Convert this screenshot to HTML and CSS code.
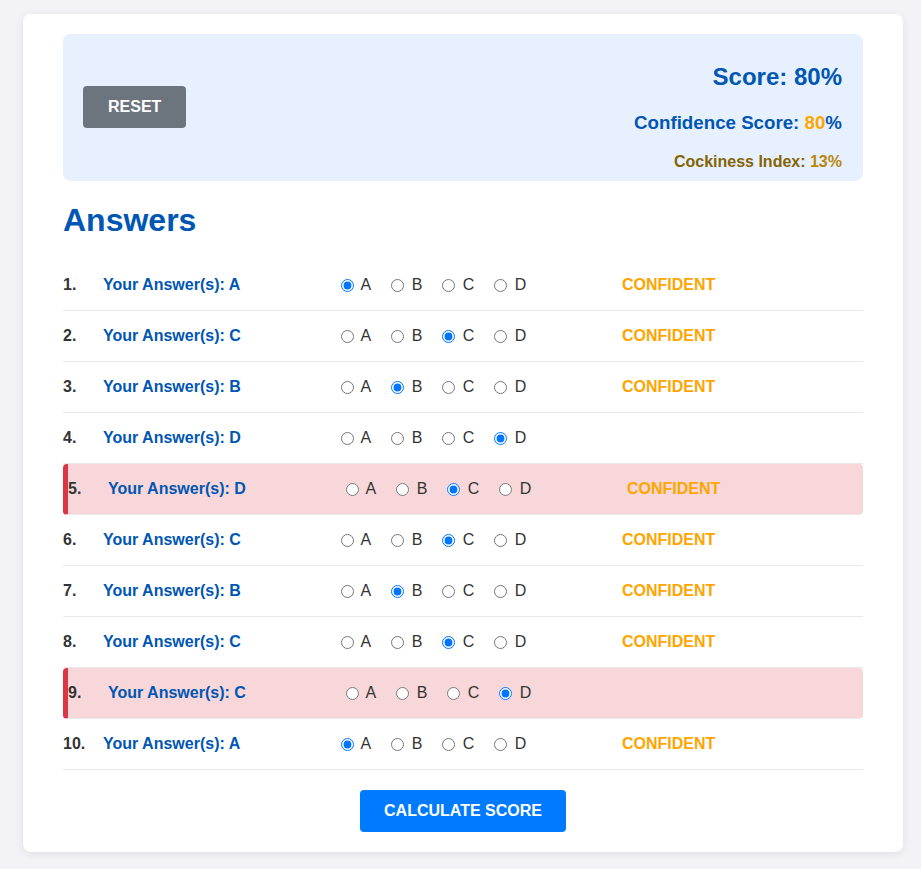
FILE: index.html
```html
<!DOCTYPE html>
<html lang="en">
<head>
<meta charset="utf-8">
<title>Answers</title>
<link rel="stylesheet" href="styles.css">
</head>
<body>
<div class="container">
  <div class="summary">
    <button class="btn btn-reset">RESET</button>
    <div class="scores">
      <h2 class="score">Score: 80%</h2>
      <h3 class="confidence">Confidence Score: <span class="orange">80</span>%</h3>
      <h4 class="cockiness">Cockiness Index: <span class="gold">13%</span></h4>
    </div>
  </div>

  <h1 class="title">Answers</h1>

  <div class="rows">
    <div class="row"><span class="num">1.</span><span class="ans">Your Answer(s): A</span>
      <span class="opts"><label><input type="radio" name="q1" checked> A</label><label><input type="radio" name="q1"> B</label><label><input type="radio" name="q1"> C</label><label><input type="radio" name="q1"> D</label></span>
      <span class="conf">CONFIDENT</span></div>
    <div class="row"><span class="num">2.</span><span class="ans">Your Answer(s): C</span>
      <span class="opts"><label><input type="radio" name="q2"> A</label><label><input type="radio" name="q2"> B</label><label><input type="radio" name="q2" checked> C</label><label><input type="radio" name="q2"> D</label></span>
      <span class="conf">CONFIDENT</span></div>
    <div class="row"><span class="num">3.</span><span class="ans">Your Answer(s): B</span>
      <span class="opts"><label><input type="radio" name="q3"> A</label><label><input type="radio" name="q3" checked> B</label><label><input type="radio" name="q3"> C</label><label><input type="radio" name="q3"> D</label></span>
      <span class="conf">CONFIDENT</span></div>
    <div class="row"><span class="num">4.</span><span class="ans">Your Answer(s): D</span>
      <span class="opts"><label><input type="radio" name="q4"> A</label><label><input type="radio" name="q4"> B</label><label><input type="radio" name="q4"> C</label><label><input type="radio" name="q4" checked> D</label></span>
      <span class="conf"></span></div>
    <div class="row wrong"><span class="num">5.</span><span class="ans">Your Answer(s): D</span>
      <span class="opts"><label><input type="radio" name="q5"> A</label><label><input type="radio" name="q5"> B</label><label><input type="radio" name="q5" checked> C</label><label><input type="radio" name="q5"> D</label></span>
      <span class="conf">CONFIDENT</span></div>
    <div class="row"><span class="num">6.</span><span class="ans">Your Answer(s): C</span>
      <span class="opts"><label><input type="radio" name="q6"> A</label><label><input type="radio" name="q6"> B</label><label><input type="radio" name="q6" checked> C</label><label><input type="radio" name="q6"> D</label></span>
      <span class="conf">CONFIDENT</span></div>
    <div class="row"><span class="num">7.</span><span class="ans">Your Answer(s): B</span>
      <span class="opts"><label><input type="radio" name="q7"> A</label><label><input type="radio" name="q7" checked> B</label><label><input type="radio" name="q7"> C</label><label><input type="radio" name="q7"> D</label></span>
      <span class="conf">CONFIDENT</span></div>
    <div class="row"><span class="num">8.</span><span class="ans">Your Answer(s): C</span>
      <span class="opts"><label><input type="radio" name="q8"> A</label><label><input type="radio" name="q8"> B</label><label><input type="radio" name="q8" checked> C</label><label><input type="radio" name="q8"> D</label></span>
      <span class="conf">CONFIDENT</span></div>
    <div class="row wrong"><span class="num">9.</span><span class="ans">Your Answer(s): C</span>
      <span class="opts"><label><input type="radio" name="q9"> A</label><label><input type="radio" name="q9"> B</label><label><input type="radio" name="q9"> C</label><label><input type="radio" name="q9" checked> D</label></span>
      <span class="conf"></span></div>
    <div class="row"><span class="num">10.</span><span class="ans">Your Answer(s): A</span>
      <span class="opts"><label><input type="radio" name="q10" checked> A</label><label><input type="radio" name="q10"> B</label><label><input type="radio" name="q10"> C</label><label><input type="radio" name="q10"> D</label></span>
      <span class="conf">CONFIDENT</span></div>
  </div>

  <div class="actions">
    <button class="btn btn-calc">CALCULATE SCORE</button>
  </div>
</div>
</body>
</html>
```

FILE: styles.css
```css
html, body {
  margin: 0;
  padding: 0;
}
body {
  background: #f3f3f7;
  font-family: "Liberation Sans", Arial, sans-serif;
  color: #333;
  padding: 14px 18px 17px 23px;
}
.container {
  width: 880px;
  box-sizing: border-box;
  background: #fff;
  border-radius: 8px;
  box-shadow: 0 2px 10px rgba(0, 0, 0, 0.08);
  padding: 20px 40px;
}
.summary {
  background: #e7f0fe;
  border-radius: 8px;
  padding: 10px 21px 10px 20px;
  display: flex;
  align-items: center;
  justify-content: space-between;
}
.btn {
  font-family: "Liberation Sans", Arial, sans-serif;
  font-weight: bold;
  font-size: 16px;
  line-height: 18px;
  color: #fff;
  border: none;
  border-radius: 4px;
  padding: 12px 25px;
  cursor: pointer;
}
.btn-reset {
  background: #6c757d;
  margin-bottom: 2px;
}
.btn-calc {
  background: #007bff;
  padding: 12px 24px;
}
.scores {
  text-align: right;
}
.score {
  font-size: 24px;
  color: #0056b3;
  margin: 19px 0 21px;
}
.confidence {
  font-size: 18.72px;
  color: #0056b3;
  margin: 0 0 19px;
}
.cockiness {
  font-size: 16px;
  color: #856404;
  margin: 0;
}
.orange { color: #ffa500; }
.gold { color: #b8860b; }
.title {
  font-size: 32px;
  color: #0056b3;
  margin: 21px 0 21px;
}
.row {
  display: grid;
  grid-template-columns: 40px 233px 286px auto;
  align-items: center;
  height: 50px;
  border-bottom: 1px solid #eaeaea;
  font-size: 16px;
}
.row.wrong {
  background: #f8d7da;
  border-left: 5px solid #dc3545;
  border-radius: 4px;
}
.num {
  font-weight: bold;
  color: #333;
}
.ans {
  font-weight: bold;
  color: #0056b3;
}
.opts {
  display: flex;
  gap: 15px;
  color: #333;
}
.opts label {
  display: flex;
  align-items: center;
  white-space: pre;
}
.opts input {
  margin: 0 3px 0 5px;
  width: 13px;
  height: 13px;
}
.conf {
  font-weight: bold;
  color: #ffa500;
}
.actions {
  display: flex;
  justify-content: center;
  margin-top: 20px;
}
```
